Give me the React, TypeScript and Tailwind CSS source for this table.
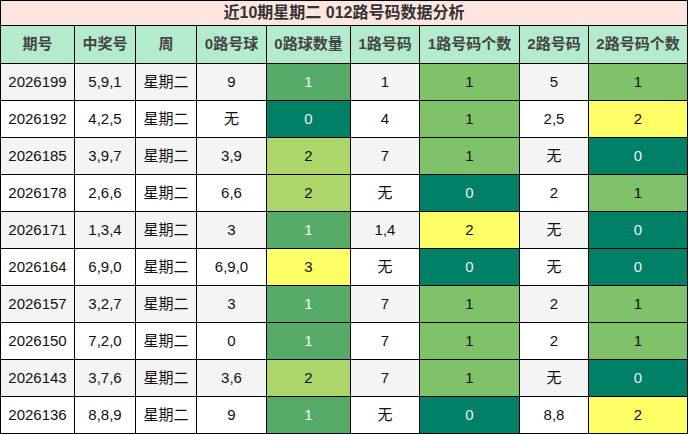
import React from 'react';

type Cell = { v: string; c?: string };

const DK = 'bg-[#008066] text-[#e8f5ee]';
const MG = 'bg-[#56ab68] text-[#f0f8f0]';
const LG = 'bg-[#acd66a] text-[#111]';
const YL = 'bg-[#ffff66] text-[#111]';
const G1 = 'bg-[#80c26a] text-[#111]';

// 0路数量 配色
const c0 = (n: string) => (n === '0' ? DK : n === '1' ? MG : n === '2' ? LG : YL);
// 1路/2路个数 配色
const c12 = (n: string) => (n === '0' ? DK : n === '1' ? G1 : YL);

const rows = [
  ['2026199', '5,9,1', '9', '1', '1', '1', '5', '1'],
  ['2026192', '4,2,5', '无', '0', '4', '1', '2,5', '2'],
  ['2026185', '3,9,7', '3,9', '2', '7', '1', '无', '0'],
  ['2026178', '2,6,6', '6,6', '2', '无', '0', '2', '1'],
  ['2026171', '1,3,4', '3', '1', '1,4', '2', '无', '0'],
  ['2026164', '6,9,0', '6,9,0', '3', '无', '0', '无', '0'],
  ['2026157', '3,2,7', '3', '1', '7', '1', '2', '1'],
  ['2026150', '7,2,0', '0', '1', '7', '1', '2', '1'],
  ['2026143', '3,7,6', '3,6', '2', '7', '1', '无', '0'],
  ['2026136', '8,8,9', '9', '1', '无', '0', '8,8', '2'],
];

const headers = ['期号', '中奖号', '周', '0路号球', '0路球数量', '1路号码', '1路号码个数', '2路号码', '2路号码个数'];

export default function App() {
  return (
    <div
      className="w-[688px] h-[434px] bg-black p-px grid gap-px grid-cols-[73px_60px_60px_69px_83px_68px_99px_68px_98px] grid-rows-[24px_37px_repeat(10,36px)]"
      style={{ fontFamily: '"Liberation Sans", "Noto Sans CJK SC", sans-serif' }}
    >
      <div className="col-span-9 bg-[#fde5e0] flex items-center justify-center text-[16px] font-bold text-[#333]">
        近10期星期二 012路号码数据分析
      </div>
      {headers.map((h) => (
        <div key={h} className="bg-[#b3ebcc] flex items-center justify-center text-[15px] font-bold text-[#444]">
          {h}
        </div>
      ))}
      {rows.map((r, i) => {
        const base = i % 2 === 0 ? 'bg-[#f4f4f4] text-[#111]' : 'bg-white text-[#111]';
        const cells: Cell[] = [
          { v: r[0] },
          { v: r[1] },
          { v: '星期二' },
          { v: r[2] },
          { v: r[3], c: c0(r[3]) },
          { v: r[4] },
          { v: r[5], c: c12(r[5]) },
          { v: r[6] },
          { v: r[7], c: c12(r[7]) },
        ];
        return cells.map((c, j) => (
          <div key={i + '-' + j} className={`${c.c ?? base} flex items-center justify-center text-[15px]`}>
            {c.v}
          </div>
        ));
      })}
    </div>
  );
}
